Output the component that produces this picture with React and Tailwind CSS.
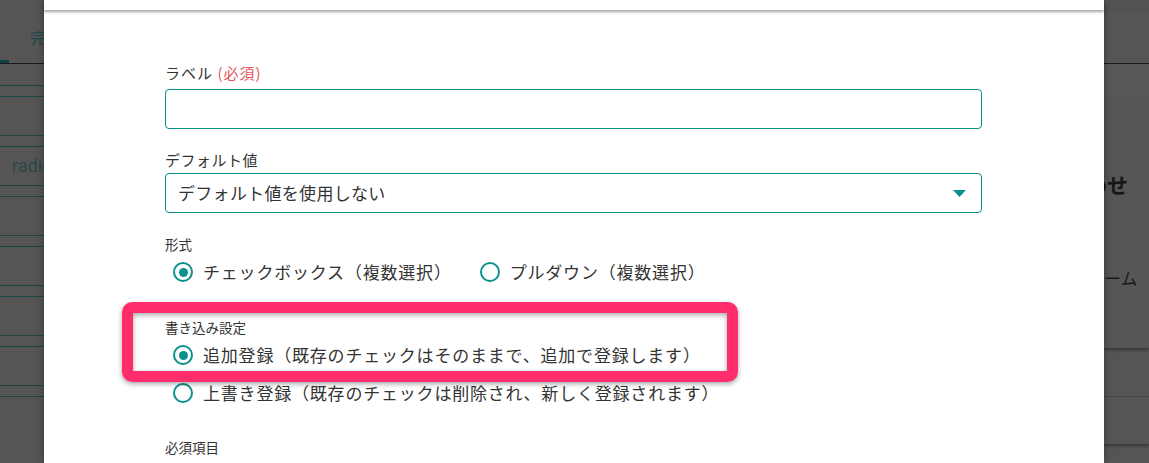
import React from "react";

function Radio({ checked, label }) {
  return (
    <div className="flex items-center h-[24px]">
      <span className="w-[20px] h-[20px] rounded-full border-2 border-[#0a918c] flex items-center justify-center shrink-0">
        {checked && <span className="w-[9px] h-[9px] rounded-full bg-[#0a918c]" />}
      </span>
      <span className="ml-[10px] text-[17px] leading-[24px] tracking-[0.8px] text-[#333] whitespace-nowrap">{label}</span>
    </div>
  );
}

function LineUnit({ children }) {
  return (
    <div className="flex flex-col">
      <div className="h-[1px] bg-[#1f4444]" />
      <div className="h-[10px]" />
      <div className="h-[1px] bg-[#164848]" />
      <div className="h-[38px] flex items-center">{children}</div>
    </div>
  );
}

export default function App() {
  return (
    <div className="w-[1149px] h-[463px] overflow-hidden flex bg-[#555555] font-['Noto_Sans_CJK_JP',sans-serif]">
      {/* left background strip */}
      <div className="w-[44px] shrink-0 overflow-hidden flex flex-col bg-[#555555]">
        <div className="pt-[29px] pl-[30px] text-[16px] leading-[16px] text-[#21484a] whitespace-nowrap">完了</div>
        <div className="mt-[15px] w-[9px] h-[3px] bg-[#0f4343]" />
        <div className="h-[1px] bg-[#1a1a1a]" />
        <div className="h-[21px]" />
        <LineUnit />
        <LineUnit>
          <span className="pl-[12px] text-[18px] leading-[20px] text-[#2c4747] font-['Roboto',sans-serif] whitespace-nowrap">radio</span>
        </LineUnit>
        <LineUnit />
        <LineUnit />
        <LineUnit />
        <LineUnit />
        <LineUnit />
      </div>

      {/* modal */}
      <div className="w-[1060px] shrink-0 bg-white relative flex flex-col shadow-[0_0_8px_rgba(0,0,0,0.35)] z-10">
        <div className="h-[10px] bg-white relative z-10 shadow-[0_2px_3px_rgba(0,0,0,0.35)]" />
        <div className="pl-[121px] pr-[122px] flex flex-col">
          <div className="mt-[53px] text-[15px] leading-[20px] tracking-[1px] text-[#333] whitespace-nowrap">
            ラベル <span className="text-[#e5575a]">(必須)</span>
          </div>
          <div className="mt-[6px] h-[40px] rounded-[4px] border border-[#0a918c]" />

          <div className="mt-[21px] text-[15px] leading-[20px] tracking-[0.5px] text-[#333] whitespace-nowrap">デフォルト値</div>
          <div className="mt-[3px] h-[40px] rounded-[4px] border border-[#0a918c] flex items-center justify-between pl-[12px] pr-[15px]">
            <span className="text-[17px] leading-[24px] tracking-[0.3px] text-[#333]">デフォルト値を使用しない</span>
            <svg width="13" height="7" viewBox="0 0 13 7">
              <polygon points="0,0 13,0 6.5,7" fill="#0a918c" />
            </svg>
          </div>

          <div className="mt-[21px] text-[13.5px] leading-[20px] text-[#333] whitespace-nowrap">形式</div>
          <div className="mt-[6px] pl-[8px] flex items-center gap-[28px]">
            <Radio checked label="チェックボックス（複数選択）" />
            <Radio label="プルダウン（複数選択）" />
          </div>

          <div className="mt-[33px] text-[13.5px] leading-[20px] text-[#333] whitespace-nowrap">書き込み設定</div>
          <div className="mt-[6px] pl-[8px]">
            <Radio checked label="追加登録（既存のチェックはそのままで、追加で登録します）" />
          </div>
          <div className="mt-[14px] pl-[8px]">
            <Radio label="上書き登録（既存のチェックは削除され、新しく登録されます）" />
          </div>

          <div className="mt-[32px] text-[13.5px] leading-[20px] text-[#333] whitespace-nowrap">必須項目</div>
        </div>

        {/* annotation highlight */}
        <div className="absolute left-[78px] top-[302px] w-[616px] h-[80px] rounded-[10px] border-[11px] border-[#ff2d6b] shadow-[0_2px_5px_rgba(0,0,0,0.35),inset_0_2px_5px_rgba(0,0,0,0.35)] pointer-events-none" />
      </div>

      {/* right background strip */}
      <div className="flex-1 overflow-hidden flex flex-col">
        <div className="h-[11px] bg-[#535353] shrink-0" />
        <div className="h-[52px] bg-[#555555] shrink-0" />
        <div className="h-[1px] bg-[#1a1a1a] shrink-0" />
        <div className="h-[31px] bg-[#585858] shrink-0" />
        <div className="h-[253px] bg-[#565656] shrink-0 flex flex-col shadow-[0_2px_3px_rgba(0,0,0,0.35)] relative">
          <div className="pt-[77px] ml-[-18px] text-[21px] leading-[24px] font-bold text-[#161616] whitespace-nowrap">わせ</div>
          <div className="mt-[72px] ml-[-34px] text-[17px] leading-[20px] text-[#1a1a1a] whitespace-nowrap">フォーム</div>
        </div>
        <div className="h-[48px] bg-[#555555] shrink-0" />
        <div className="h-[1px] bg-[#484848] shrink-0" />
        <div className="h-[47px] bg-[#555555] shrink-0 shadow-[0_2px_3px_rgba(0,0,0,0.35)] relative" />
        <div className="flex-1 bg-[#555555]" />
      </div>
    </div>
  );
}
